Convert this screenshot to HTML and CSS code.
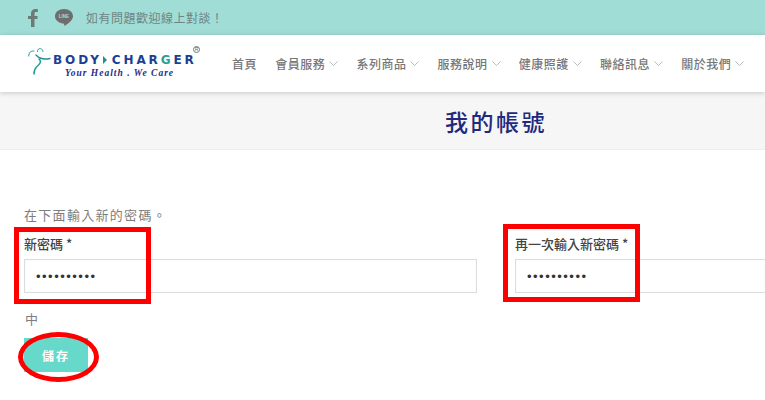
FILE: index.html
```html
<!DOCTYPE html>
<html lang="zh-Hant">
<head>
<meta charset="utf-8">
<title>我的帳號</title>
<link rel="stylesheet" href="styles.css">
</head>
<body>
<div class="topbar">
  <svg class="icon-fb" viewBox="0 0 10 18" width="10" height="18"><path d="M3 18V10H0V7h3V4.500C3 1.500 4.800 0 7.300 0c1.200 0 2.200.1 2.500.1v2.800H8.100C6.800 2.900 6.500 3.600 6.500 4.500V7h3.200l-.4 3H6.500v8z"/></svg>
  <svg class="icon-line" viewBox="0 0 18 17" width="18" height="17"><path class="bubble" d="M9 0c5 0 9 3 9 7.200 0 3.800-5 7.600-8.300 9.500-.6.300-.6-.5-.5-1.200.1-.6 0-1-.9-1.100C3.600 13.900 0 11 0 7.200 0 3 4 0 9 0z"/><text x="9" y="9.200" class="line-text">LINE</text></svg>
  <span class="top-text">如有問題歡迎線上對談！</span>
</div>

<header class="header">
  <div class="logo">
    <svg class="logo-man" viewBox="0 0 23 28" width="23" height="28"><g fill="none" stroke-linecap="round"><path d="M.7 9C.7 5.500 3 3.500 6 4" stroke="#2a9d97" stroke-width="1"/><path d="M9.500 4.500C9 .5 15 .5 15 4.500" stroke="#2a9d97" stroke-width="1"/><path d="M8 8c3 3.500 7 5 14 3.500" stroke="#1f8f93" stroke-width="1.400"/><path d="M11 12c3 2.500 1 5-2.500 8-2 2-2.500 4-2.500 7" stroke="#1f9f96" stroke-width="1.500"/></g></svg>
    <div class="logo-words">
      <div class="logo-main">BODY<span class="logo-arrow"></span>CHAR<span class="logo-g">G</span>ER</div>
      <div class="logo-sub">Your Health . We Care</div>
    </div>
    <span class="logo-r">R</span>
  </div>
  <nav class="nav">
    <a class="nav-item">首頁</a>
    <a class="nav-item">會員服務<svg class="chev" viewBox="0 0 9 5"><path d="M.5.500 4.500 4.500 8.500.500"/></svg></a>
    <a class="nav-item">系列商品<svg class="chev" viewBox="0 0 9 5"><path d="M.5.500 4.500 4.500 8.500.500"/></svg></a>
    <a class="nav-item">服務說明<svg class="chev" viewBox="0 0 9 5"><path d="M.5.500 4.500 4.500 8.500.500"/></svg></a>
    <a class="nav-item">健康照護<svg class="chev" viewBox="0 0 9 5"><path d="M.5.500 4.500 4.500 8.500.500"/></svg></a>
    <a class="nav-item">聯絡訊息<svg class="chev" viewBox="0 0 9 5"><path d="M.5.500 4.500 4.500 8.500.500"/></svg></a>
    <a class="nav-item">關於我們<svg class="chev" viewBox="0 0 9 5"><path d="M.5.500 4.500 4.500 8.500.500"/></svg></a>
  </nav>
</header>

<div class="title-band"><h1 class="title">我的帳號</h1></div>

<main class="content">
  <p class="intro">在下面輸入新的密碼。</p>
  <div class="fields">
    <div class="field field-a">
      <label class="label">新密碼 *</label>
      <input class="input" type="password" value="1234567890">
    </div>
    <div class="field field-b">
      <label class="label">再一次輸入新密碼 *</label>
      <input class="input" type="password" value="1234567890">
    </div>
  </div>
  <p class="strength">中</p>
  <button class="save">儲存</button>
</main>

<div class="mark mark-a"></div>
<div class="mark mark-b"></div>
<div class="mark-oval"></div>
</body>
</html>
```
FILE: styles.css
```css
* { box-sizing: border-box; }
html, body { margin: 0; padding: 0; }
body {
  width: 765px;
  height: 400px;
  overflow: hidden;
  position: relative;
  background: #fff;
  font-family: "Noto Sans CJK TC", "Liberation Sans", sans-serif;
}
.topbar {
  height: 35px;
  background: #a0ddd6;
  display: flex;
  align-items: center;
  padding-left: 28px;
}
.icon-fb { fill: #6e7a78; margin-right: 17px; }
.icon-line { margin-right: 13px; overflow: visible; }
.bubble { fill: #6e6e6e; }
.line-text { font: bold 4.500px "Liberation Sans", sans-serif; fill: #a0ddd6; text-anchor: middle; }
.top-text { font-size: 12px; letter-spacing: .5px; color: #6f8583; }

.header {
  height: 57px;
  background: #fff;
  box-shadow: 0 1px 5px rgba(0,0,0,.2);
  display: flex;
  align-items: center;
  position: relative;
  padding-left: 28px;
}
.logo { width: 204px; height: 40px; display: flex; position: relative; flex: none; }
.logo-man { margin-top: 3px; flex: none; }
.logo-words { margin-left: 2px; margin-top: 9px; }
.logo-main {
  font: bold 12px/14px "DejaVu Sans", sans-serif;
  letter-spacing: 2.900px;
  color: #1c3f94;
  white-space: nowrap;
}
.logo-g { color: #2aa198; }
.logo-arrow {
  display: inline-block;
  width: 0; height: 0;
  border-left: 4px solid #1f8f93;
  border-top: 4px solid transparent;
  border-bottom: 4px solid transparent;
  margin: 0 5px 0 1px;
  vertical-align: 0;
}
.logo-sub {
  font: italic bold 9.500px/13px "Liberation Serif", serif;
  letter-spacing: 1px;
  color: #2b2a8c;
  margin-left: 12px;
}
.logo-r {
  position: absolute;
  left: 165px; top: 2px;
  width: 7px; height: 7px;
  border: 1px solid #777;
  border-radius: 50%;
  font: 4.500px/5px "Liberation Sans", sans-serif;
  color: #555;
  text-align: center;
}
.nav { display: flex; gap: 18.200px; }
.nav-item {
  font-size: 12px;
  letter-spacing: .5px;
  color: #777;
  font-weight: 500;
  display: flex;
  align-items: center;
  white-space: nowrap;
}
.chev { width: 9px; height: 5px; margin-left: 4px; fill: none; stroke: #aaa; stroke-width: .8; }

.title-band {
  height: 58px;
  background: #f6f6f6;
  border-bottom: 1px solid #eee;
  display: flex;
  align-items: center;
  padding-left: 445px;
}
.title {
  margin: 0;
  font-size: 23px;
  font-weight: 500;
  letter-spacing: 2.500px;
  color: #1f2a7c;
}
.content { padding: 55px 0 0 24px; }
.intro { margin: 0; font-size: 13px; line-height: 20px; letter-spacing: 1.300px; color: #7d7d7d; }
.fields { display: flex; margin-top: 9px; }
.field { flex: none; }
.field-a { width: 491px; }
.field-b { width: 250px; }
.label { display: block; font-size: 13px; line-height: 20px; color: #444; font-weight: 500; margin-bottom: 5px; }
.input {
  display: block;
  height: 34px;
  border: 1px solid #ddd;
  background: #fff;
  padding: 0 11px;
  font-size: 13px;
  color: #333;
  outline: none;
  box-shadow: inset 0 0 2px rgba(0,0,0,.06);
  letter-spacing: 1.500px;
}
.field-a .input { width: 453px; }
.field-b .input { width: 250px; border-right: 0; }
.strength { margin: 16px 0 0 1px; font-size: 13px; line-height: 20px; color: #7d7d7d; }
.save {
  display: block;
  margin-top: 9px;
  width: 64px;
  height: 34px;
  border: 0;
  padding: 0;
  background: #66d9cb;
  color: #fff;
  font-family: inherit;
  font-size: 12px;
  font-weight: 700;
  letter-spacing: 2px;
}
.mark { position: absolute; border: 5px solid #f00; }
.mark-a { left: 14px; top: 227px; width: 137px; height: 77px; }
.mark-b { left: 503px; top: 224px; width: 137px; height: 78px; }
.mark-oval { position: absolute; left: 18px; top: 332px; width: 81px; height: 50px; border: 5px solid #f00; border-radius: 50%; }
```
